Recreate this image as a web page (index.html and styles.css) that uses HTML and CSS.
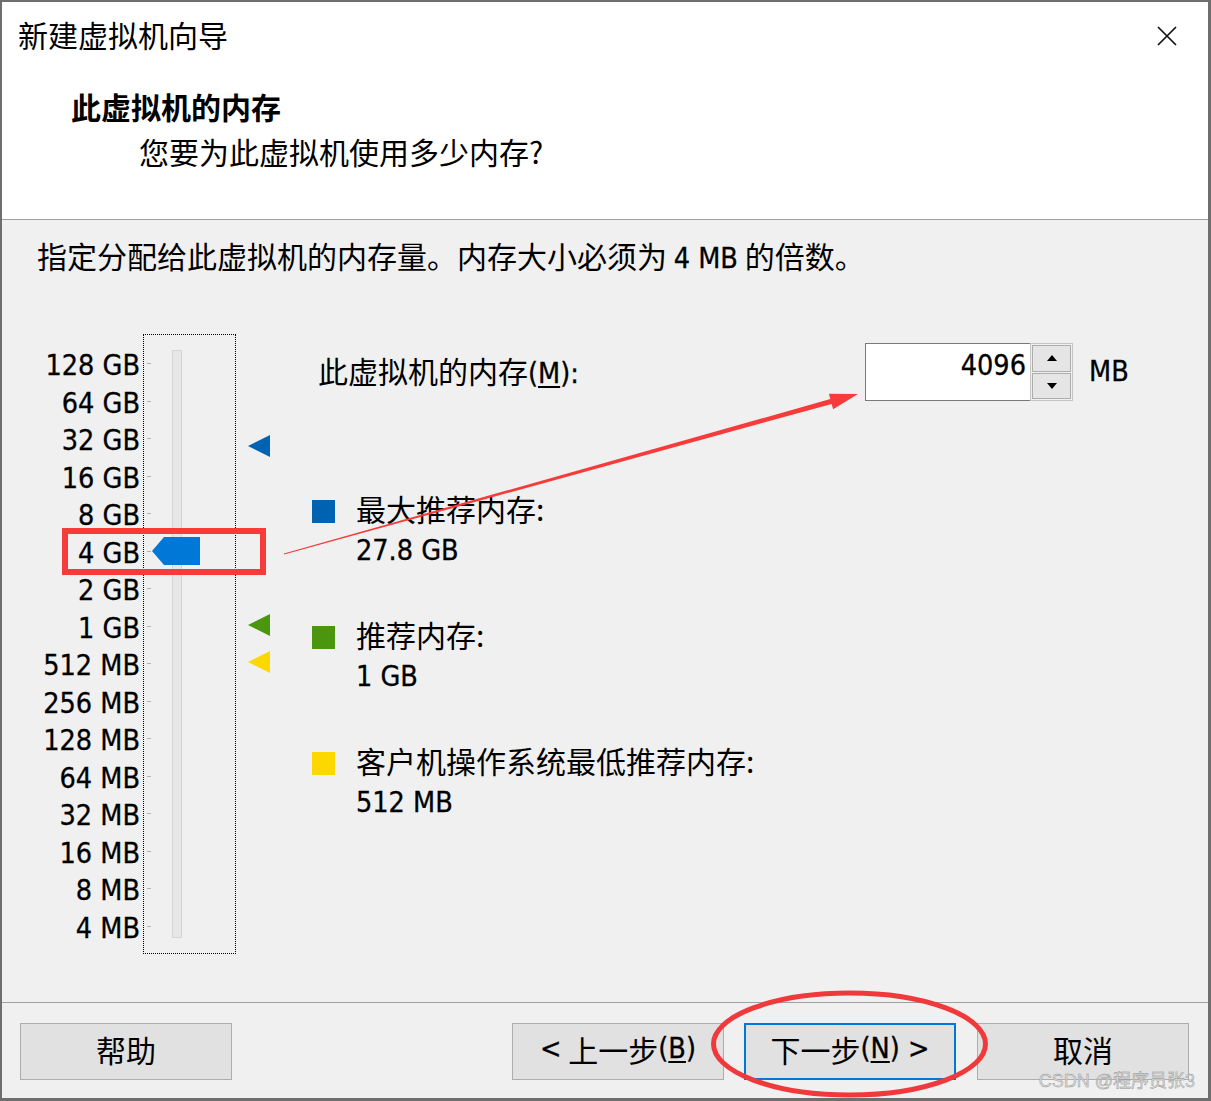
FILE: index.html
```html
<!DOCTYPE html>
<html lang="zh-CN">
<head>
<meta charset="utf-8">
<title>新建虚拟机向导</title>
<link rel="stylesheet" href="styles.css">
</head>
<body>
<div class="window">
  <header class="header">
    <div class="titlebar">
      <div class="title">新建虚拟机向导</div>
      <svg class="close" width="20" height="20" viewBox="0 0 20 20"><path d="M1 1L19 19M19 1L1 19" stroke="#111" stroke-width="1.7" fill="none"/></svg>
    </div>
    <h1 class="heading">此虚拟机的内存</h1>
    <p class="subheading">您要为此虚拟机使用多少内存?</p>
  </header>
  <main class="body">
    <p class="intro">指定分配给此虚拟机的内存量。内存大小必须为 <span class="lat">4 MB</span> 的倍数。</p>
    <div class="main">
      <div class="scale">
        <ul class="labels">
          <li>128 GB</li><li>64 GB</li><li>32 GB</li><li>16 GB</li>
          <li>8 GB</li><li>4 GB</li><li>2 GB</li><li>1 GB</li>
          <li>512 MB</li><li>256 MB</li><li>128 MB</li><li>64 MB</li>
          <li>32 MB</li><li>16 MB</li><li>8 MB</li><li>4 MB</li>
        </ul>
        <div class="slider">
          <ul class="ticks">
            <li></li><li></li><li></li><li></li><li></li><li></li><li></li><li></li>
            <li></li><li></li><li></li><li></li><li></li><li></li><li></li><li></li>
          </ul>
          <div class="track"></div>
          <div class="thumb"></div>
        </div>
        <div class="markers">
          <span class="mark mark-max"></span>
          <span class="mark mark-rec"></span>
          <span class="mark mark-min"></span>
        </div>
      </div>
      <div class="info">
        <div class="memrow">
          <span class="memlabel">此虚拟机的内存<span class="lat">(<u>M</u>):</span></span>
          <div class="spin">
            <div class="field lat">4096</div>
            <div class="spinbtns">
              <div class="sb"><span class="arrow-up"></span></div>
              <div class="sb"><span class="arrow-down"></span></div>
            </div>
          </div>
          <span class="unit lat">MB</span>
        </div>
        <div class="legend">
          <div class="item">
            <span class="swatch sw-max"></span>
            <div class="itext"><div class="ilabel">最大推荐内存:</div><div class="lat">27.8 GB</div></div>
          </div>
          <div class="item">
            <span class="swatch sw-rec"></span>
            <div class="itext"><div class="ilabel">推荐内存:</div><div class="lat">1 GB</div></div>
          </div>
          <div class="item">
            <span class="swatch sw-min"></span>
            <div class="itext"><div class="ilabel">客户机操作系统最低推荐内存:</div><div class="lat">512 MB</div></div>
          </div>
        </div>
      </div>
    </div>
  </main>
  <footer class="footer">
    <button class="btn">帮助</button>
    <button class="btn btn-back"><span class="lat">&lt;</span>&nbsp;上一步<span class="lat">(<u>B</u>)</span></button>
    <button class="btn btn-next">下一步<span class="lat">(<u>N</u>) &gt;</span></button>
    <button class="btn btn-cancel">取消</button>
  </footer>
  <svg class="overlay" width="1211" height="1101" viewBox="0 0 1211 1101">
    <rect x="65" y="531" width="198" height="41" fill="none" stroke="#f73b3b" stroke-width="6"/>
    <polygon points="284.1,554.5 831.7,403.9 833.1,409.2 858,394 828.9,393.8 830.3,399.1 283.9,553.5" fill="#f73b3b"/>
    <ellipse cx="849.5" cy="1044" rx="136" ry="51" fill="none" stroke="#f0393b" stroke-width="5"/>
  </svg>
  <span class="watermark">CSDN @程序员张3</span>
</div>
</body>
</html>
```
FILE: styles.css
```css
* { box-sizing: border-box; margin: 0; padding: 0; }
body {
  margin: 0;
  background: #ffffff;
  font-family: "Noto Sans CJK SC", "Noto Sans", sans-serif;
  color: #000;
}
.lat {
  font-family: "DejaVu Sans Condensed", "DejaVu Sans", "Noto Sans CJK SC", sans-serif;
  font-stretch: condensed;
  font-size: 28.5px;
  -webkit-text-stroke: 0.3px #000;
}
.window {
  position: relative;
  width: 1211px;
  height: 1101px;
  border: 2px solid #6e6e6e;
  border-right-width: 3px;
  border-bottom-width: 3px;
  display: flex;
  flex-direction: column;
  overflow: hidden;
  background: #f0f0f0;
}
/* header */
.header {
  flex: none;
  height: 218px;
  background: #ffffff;
  border-bottom: 1px solid #a0a0a0;
  padding: 12px 31px 0 16px;
}
.titlebar {
  display: flex;
  justify-content: space-between;
  align-items: center;
  height: 40px;
}
.title { font-size: 30px; line-height: 40px; }
.close { display: block; margin-top: 4px; }
.heading {
  font-size: 30px;
  font-weight: 700;
  line-height: 40px;
  margin: 32px 0 0 53px;
}
.subheading {
  font-size: 30px;
  line-height: 40px;
  margin: 5px 0 0 121px;
}
/* body */
.body {
  flex: none;
  height: 782px;
  padding: 15px 0 0 35px;
}
.intro { font-size: 30px; line-height: 40px; height: 40px; white-space: nowrap; }
.intro .lat { line-height: 1; }
.main {
  display: flex;
  align-items: flex-start;
  margin-top: 59px;
  margin-left: 1px;
}
.scale { display: flex; align-items: flex-start; }
.labels {
  list-style: none;
  width: 102px;
  margin-right: 3px;
  padding-top: 13px;
  text-align: right;
  font-family: "DejaVu Sans Condensed", "DejaVu Sans", sans-serif;
  font-stretch: condensed;
  font-size: 28.5px;
  -webkit-text-stroke: 0.3px #000;
}
.labels li { height: 37.5px; line-height: 37.5px; white-space: nowrap; }
.slider {
  position: relative;
  width: 93px;
  height: 620px;
  border: 1px dotted #000;
  display: flex;
  padding-left: 3px;
}
.ticks { list-style: none; width: 4px; padding-top: 10px; }
.ticks li { height: 37.5px; display: flex; align-items: center; }
.ticks li::before { content: ""; display: block; width: 4px; height: 1px; background: #b4b4b4; }
.track {
  margin: 15px 0 0 21px;
  width: 10px;
  height: 588px;
  background: #e6e8e8;
  border: 1px solid #d3d5d5;
}
.thumb {
  position: absolute;
  left: 8px;
  top: 202px;
  width: 48px;
  height: 28px;
  background: #0078d7;
  clip-path: polygon(0 50%, 12px 0, 100% 0, 100% 100%, 12px 100%);
}
.markers { position: relative; width: 22px; height: 620px; margin-left: 12px; }
.mark {
  position: absolute;
  left: 0;
  width: 0;
  height: 0;
  border-top: 11.5px solid transparent;
  border-bottom: 11.5px solid transparent;
  border-right: 22px solid #0063b1;
}
.mark-max { top: 100.5px; border-right-color: #0063b1; }
.mark-rec { top: 279.5px; border-right-color: #4a970f; }
.mark-min { top: 316.5px; border-right-color: #fcd800; }
/* info */
.info { margin: 9px 0 0 42px; }
.memrow { display: flex; align-items: center; height: 58px; padding-left: 6px; }
.memlabel { width: 547px; font-size: 30px; line-height: 40px; white-space: nowrap; margin-bottom: 5px; }
.memlabel .lat { line-height: 1; }
.spin { display: flex; height: 58px; }
.field {
  width: 165px;
  height: 58px;
  background: #fff;
  border: 1px solid #7a7a7a;
  border-right: none;
  text-align: right;
  padding-right: 4px;
  line-height: 44px;
}
.spinbtns {
  width: 43px;
  height: 58px;
  border: 1px solid #c4c4c4;
  padding: 1px;
  display: flex;
  flex-direction: column;
  gap: 1px;
}
.sb {
  height: 27px;
  background: #e5e5e5;
  border: 1px solid #adadad;
  display: flex;
  align-items: center;
  justify-content: center;
}
.arrow-up, .arrow-down {
  width: 0; height: 0;
  border-left: 5.5px solid transparent;
  border-right: 5.5px solid transparent;
}
.arrow-up { border-bottom: 6px solid #000; }
.arrow-down { border-top: 6px solid #000; }
.unit { margin-left: 16px; line-height: 40px; }
.legend { margin-top: 90px; }
.item { display: flex; height: 80px; }
.item + .item { margin-top: 46px; }
.swatch { flex: none; width: 23px; height: 23px; margin: 9px 21px 0 0; }
.sw-max { background: #0063b1; }
.sw-rec { background: #4a970f; }
.sw-min { background: #fcd800; }
.itext { font-size: 30px; line-height: 40px; white-space: nowrap; }
.ilabel { height: 40px; margin: -3px 0 3px; }
.itext .lat { line-height: 40px; height: 40px; }
/* footer */
.footer {
  flex: none;
  height: 96px;
  border-top: 1px solid #a0a0a0;
  padding: 20px 0 0 18px;
  display: flex;
  align-items: flex-start;
}
.btn {
  width: 212px;
  height: 57px;
  padding-bottom: 5px;
  background: #e1e1e1;
  border: 1px solid #adadad;
  font-family: "Noto Sans CJK SC", sans-serif;
  font-size: 30px;
  line-height: 40px;
  color: #000;
  display: flex;
  align-items: center;
  justify-content: center;
  white-space: nowrap;
}
.btn .lat { line-height: 1; }
.btn-back { margin-left: 280px; }
.btn-next { margin-left: 20px; border: 2px solid #0078d7; }
.btn-cancel { margin-left: 21px; }
.btn u, .memlabel u { text-decoration-thickness: 2px; text-underline-offset: 3px; }
.overlay { position: absolute; left: -2px; top: -2px; pointer-events: none; }
.watermark {
  position: absolute;
  right: 13px;
  bottom: 7px;
  font-size: 18px;
  line-height: 20px;
  color: #dcdcdc;
  -webkit-text-stroke: 0.4px #8c8c8c;
  font-family: "Liberation Sans", "Noto Sans CJK SC", sans-serif;
}
```
